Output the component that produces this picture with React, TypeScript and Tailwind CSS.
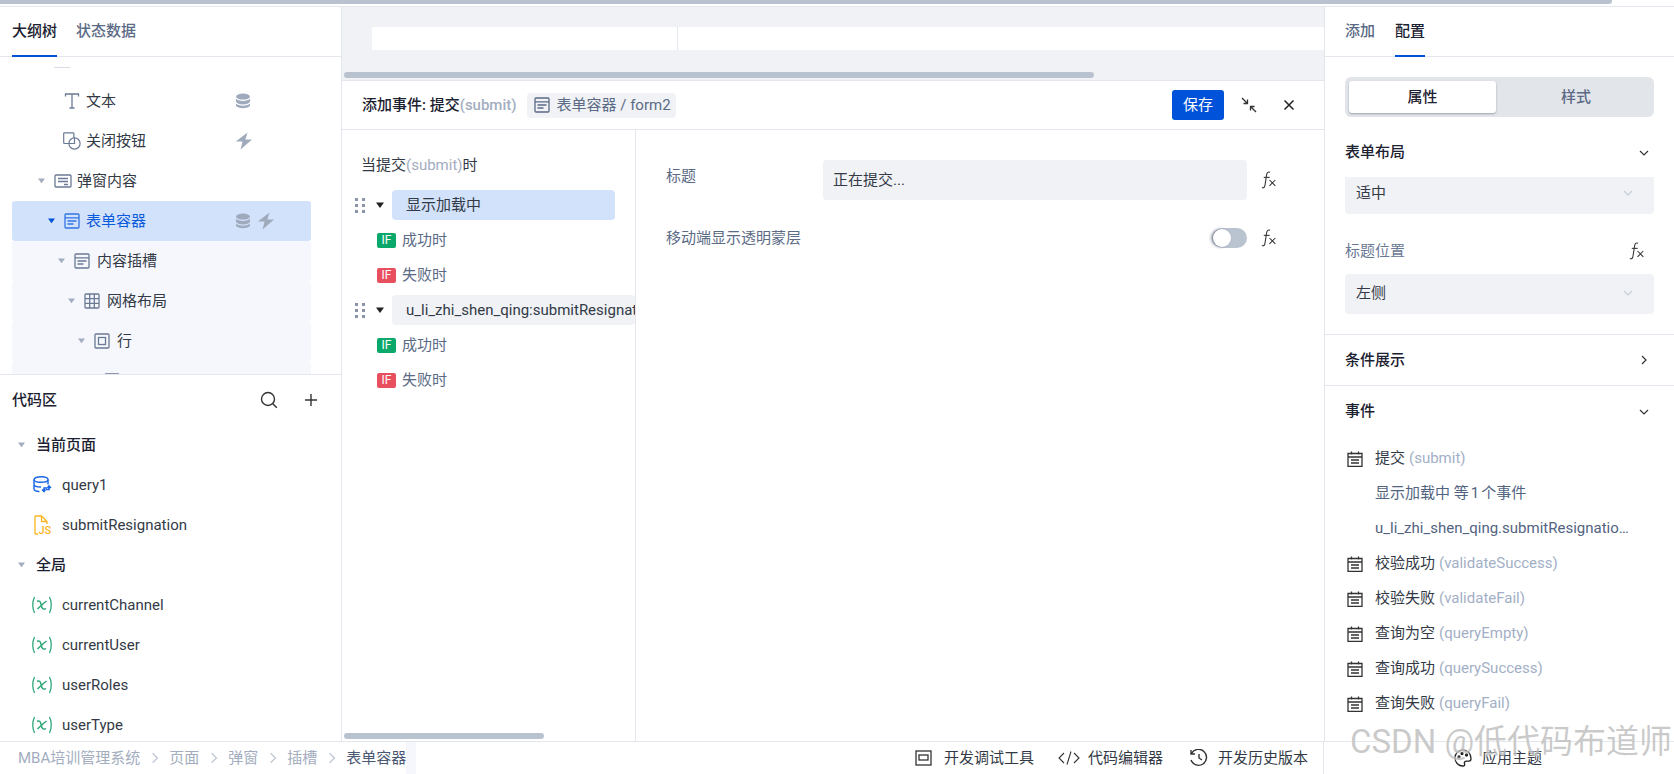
import React from "react";

const FONT = "font-['Roboto','Noto_Sans_CJK_SC',sans-serif]";

const Caret = ({ c = "#a3adc0", s = 8 }: { c?: string; s?: number }) => (
  <svg width={s} height={s * 0.75} viewBox="0 0 8 6" className="shrink-0"><path d="M0 0.5h8L4 6z" fill={c} /></svg>
);
const DbFill = () => (
  <svg width="16" height="16" viewBox="0 0 16 16" className="shrink-0" fill="#a0aabd">
    <ellipse cx="8" cy="3.6" rx="7" ry="3" />
    <path d="M1 5.8c1.4 1.4 4 2.1 7 2.1s5.6-.7 7-2.1v3c-.6 1.6-3.6 2.6-7 2.6s-6.4-1-7-2.6z" />
    <path d="M1 10.6c1.4 1.4 4 2.1 7 2.1s5.6-.7 7-2.1v2c-.6 1.7-3.6 2.7-7 2.7s-6.4-1-7-2.7z" />
  </svg>
);
const Bolt = () => (
  <svg width="18" height="18" viewBox="0 0 18 18" className="shrink-0"><path d="M12.5 .5L.8 9.5h6.7l-1.9 8L17 7.6h-6.6z" fill="#a0aabd" /></svg>
);
const FormIcon = ({ c = "#6b7a94", s = 16 }: { c?: string; s?: number }) => (
  <svg width={s} height={s} viewBox="0 0 16 16" fill="none" stroke={c} strokeWidth="1.3" className="shrink-0">
    <rect x="1" y="1" width="14" height="14" rx="1" /><path d="M1 4.8h14M3.5 8h9M3.5 11h6" />
  </svg>
);
const PopupIcon = () => (
  <svg width="18" height="14" viewBox="0 0 18 14" fill="none" stroke="#6b7a94" strokeWidth="1.3" className="shrink-0">
    <rect x="1" y="1" width="16" height="12" rx="1" /><path d="M4 4.5h10M4 7.5h10M10 10.5h4" />
  </svg>
);
const GridIcon = () => (
  <svg width="16" height="16" viewBox="0 0 16 16" fill="none" stroke="#6b7a94" strokeWidth="1.3" className="shrink-0">
    <rect x="1" y="1" width="14" height="14" rx="1" /><path d="M1 5.7h14M1 10.3h14M5.7 1v14M10.3 1v14" />
  </svg>
);
const RowIcon = () => (
  <svg width="16" height="16" viewBox="0 0 16 16" fill="none" stroke="#6b7a94" strokeWidth="1.3" className="shrink-0">
    <rect x="1" y="1" width="14" height="14" rx="1" /><rect x="4.5" y="4.5" width="7" height="7" />
  </svg>
);
const TextIcon = () => (
  <svg width="16" height="16" viewBox="0 0 16 16" fill="none" stroke="#6b7a94" strokeWidth="1.3" className="shrink-0">
    <path d="M1.5 3.5V1h13v2.5M8 1v14M5.5 15h5" />
  </svg>
);
const BtnIcon = () => (
  <svg width="18" height="18" viewBox="0 0 18 18" fill="none" stroke="#6b7a94" strokeWidth="1.2" className="shrink-0">
    <path d="M6 11.5H1.5a.8.8 0 0 1-.8-.8V1.6a.8.8 0 0 1 .8-.8h8.6a.8.8 0 0 1 .8.8V6" />
    <circle cx="11.5" cy="11.5" r="5.6" /><path d="M5.8 11.5h5.7V6" />
  </svg>
);
const Chev = ({ dir = "down", c = "#333", s = 10 }: { dir?: "down" | "right"; c?: string; s?: number }) => (
  <svg width={s} height={s} viewBox="0 0 10 10" fill="none" stroke={c} strokeWidth="1.2" className="shrink-0">
    {dir === "down" ? <path d="M1 3l4 4 4-4" /> : <path d="M3 1l4 4-4 4" />}
  </svg>
);
const Fx = () => (
  <svg width="17" height="18" viewBox="0 0 16 17" fill="none" stroke="#333" strokeWidth="1" className="shrink-0">
    <path d="M8.5 1.2C6.6.4 5.7 1.4 5.3 3.5L3.7 13.5C3.3 15.7 2.3 16.3.8 15.6" /><path d="M2.6 6h5.6" />
    <path d="M8 8.5l5.500 5.500M13.500 8.500L8 14" />
  </svg>
);
const Cal = () => (
  <svg width="16" height="16" viewBox="0 0 16 16" fill="none" stroke="#333" strokeWidth="1.3" className="shrink-0">
    <path d="M1 2.5h14v12.8H1zM1 6h14M4.5.5v3M11.5.5v3M4 9h8M4 12h8" />
  </svg>
);
const Var = () => (
  <svg width="22" height="18" viewBox="0 0 22 18" fill="none" stroke="#2fa87a" strokeWidth="1.3" className="shrink-0">
    <path d="M3.5 1C1.2 5.5 1.2 12.5 3.5 17M18.5 1c2.3 4.500 2.300 11.500 0 16" />
    <path d="M6 5.200c2.800-1.100 3.500.7 4.200 3.800s1.300 5 4.800 3.600M15.500 5c-2.800 1.900-5.200 4.500-9 8" strokeWidth="1.500" />
  </svg>
);
const QueryIcon = () => (
  <svg width="19" height="18" viewBox="0 0 19 18" fill="none" stroke="#1b66e6" strokeWidth="1.400" className="shrink-0">
    <ellipse cx="8" cy="3.500" rx="7" ry="2.800" />
    <path d="M1 3.500v9.300c0 1.500 2.300 2.600 5.500 2.800M1 8.200c0 1.600 3 2.800 7 2.800M15 3.500v5" />
    <path d="M9 13.500l2 2 1.500-2M11 15.500v-3.500h3" strokeWidth="1.500" />
    <path d="M18 12l-2-2-1.500 2M16 10v3.500h-3" strokeWidth="1.500" />
  </svg>
);
const JsIcon = () => (
  <svg width="17" height="20" viewBox="0 0 17 20" fill="none" stroke="#fbb41e" strokeWidth="1.300" className="shrink-0">
    <path d="M4 19H2a1 1 0 0 1-1-1V2a1 1 0 0 1 1-1h5.500L13 6.500V9" /><path d="M7.500 1v5.500H13" />
    <text x="4.500" y="19" fontSize="11" fontWeight="500" fill="#fbb41e" stroke="none" fontFamily="Roboto, sans-serif">JS</text>
  </svg>
);

type TreeRowProps = {
  pad: number; icon: React.ReactNode; label: string; caret?: boolean; bg?: string; blue?: boolean; extra?: React.ReactNode; textGap?: string;
};
const TreeRow = ({ pad, icon, label, caret = true, bg = "", blue, extra, textGap = "ml-[7px]" }: TreeRowProps) => (
  <div className={`relative flex h-10 w-[299px] shrink-0 items-center rounded-[3px] ${bg}`} style={{ paddingLeft: pad }}>
    <div className="flex w-[16px] shrink-0 items-center">{caret && <Caret c={blue ? "#0052d9" : "#a3adc0"} s={7} />}</div>
    {icon}
    <span className={`${textGap} ${blue ? "text-[#0b5bdd]" : "text-[#333a46]"}`}>{label}</span>
    {extra && <div className="absolute left-[223px] top-0 flex h-full items-center gap-[6px]">{extra}</div>}
  </div>
);

const LeftPanel = () => (
  <div className="flex h-full w-[341px] shrink-0 flex-col">
    <div className="flex h-[50px] shrink-0 gap-[19px] border-b border-[#e3e6ec] pl-3">
      <div className="-mb-px flex items-center border-b-2 border-[#0052d9] font-medium text-[#1b2130]">大纲树</div>
      <div className="flex items-center font-medium text-[#5b6a85]">状态数据</div>
    </div>
    <div className="h-[317px] shrink-0 overflow-hidden pl-3">
      <div className="flex flex-col">
        <div className="h-6 pl-[42px] pt-[10px]"><div className="h-px w-4 bg-[#d8dce4]" /></div>
        <TreeRow pad={36} caret={false} icon={<TextIcon />} label="文本" textGap="ml-[6px]" extra={<DbFill />} />
        <TreeRow pad={35} caret={false} icon={<BtnIcon />} label="关闭按钮" textGap="ml-[5px]" extra={<Bolt />} />
        <TreeRow pad={26} icon={<PopupIcon />} label="弹窗内容" textGap="ml-[5px]" />
        <TreeRow pad={36} blue bg="bg-[#d2e2fa]" icon={<FormIcon c="#2f74e6" />} label="表单容器" textGap="ml-[6px]" extra={<><DbFill /><Bolt /></>} />
        <TreeRow pad={46} bg="bg-[#f5f7fd]" icon={<FormIcon />} label="内容插槽" />
        <TreeRow pad={56} bg="bg-[#f5f7fd]" icon={<GridIcon />} label="网格布局" />
        <TreeRow pad={66} bg="bg-[#f5f7fd]" icon={<RowIcon />} label="行" />
        <TreeRow pad={76} bg="bg-[#f5f7fd]" caret={false} icon={<RowIcon />} label="" />
      </div>
    </div>
    <div className="flex min-h-0 flex-1 flex-col border-t border-[#e3e6ec] pl-3">
      <div className="flex h-[50px] shrink-0 items-center font-medium text-[#1b2130]">
        <span className="flex-1">代码区</span>
        <svg width="18" height="18" viewBox="0 0 18 18" fill="none" stroke="#333" strokeWidth="1.4"><circle cx="8" cy="8" r="6.500" /><path d="M12.800 12.800l4 4" /></svg>
        <svg width="12" height="12" viewBox="0 0 12 12" fill="none" stroke="#333" strokeWidth="1.4" className="ml-[27px] mr-[24px]"><path d="M6 0v12M0 6h12" /></svg>
      </div>
      <CodeHead label="当前页面" />
      <CodeRow icon={<QueryIcon />} label="query1" />
      <CodeRow icon={<JsIcon />} label="submitResignation" />
      <CodeHead label="全局" />
      <CodeRow icon={<Var />} label="currentChannel" />
      <CodeRow icon={<Var />} label="currentUser" />
      <CodeRow icon={<Var />} label="userRoles" />
      <CodeRow icon={<Var />} label="userType" />
    </div>
  </div>
);
const CodeHead = ({ label }: { label: string }) => (
  <div className="flex h-10 shrink-0 items-center pl-[6px] font-medium text-[#1b2130]">
    <Caret s={7} /><span className="ml-[11px]">{label}</span>
  </div>
);
const CodeRow = ({ icon, label }: { icon: React.ReactNode; label: string }) => (
  <div className="flex h-10 shrink-0 items-center text-[#333a46]">
    <div className="flex w-[50px] shrink-0 justify-center pl-[10px]">{icon}</div>
    <span>{label}</span>
  </div>
);

const Dots = () => (
  <div className="grid w-[9px] shrink-0 grid-cols-2 gap-x-[5px] gap-y-[3px]">
    {[0, 1, 2, 3, 4, 5].map((i) => <div key={i} className="h-[3px] w-[2.5px] bg-[#8a94a6]" />)}
  </div>
);
const IfRow = ({ ok, label }: { ok: boolean; label: string }) => (
  <div className="flex h-[35px] items-center pl-[35px] text-[#5b6a85]">
    <div className={`flex h-[15px] w-[19px] items-center justify-center rounded-[2px] text-[12px] text-white ${ok ? "bg-[#0aa86b]" : "bg-[#e8505f]"}`}>IF</div>
    <span className="ml-[6px]">{label}</span>
  </div>
);
const ActionRow = ({ label, bg }: { label: string; bg: string }) => (
  <div className="flex h-[35px] items-center pl-[13px]">
    <Dots />
    <div className="ml-[12px] mr-[8px]"><Caret c="#222" s={8} /></div>
    <div className={`flex h-[30px] flex-1 items-center overflow-hidden whitespace-nowrap rounded-[4px] pl-[14px] text-[#333a46] ${bg}`}>{label}</div>
  </div>
);

const CenterPanel = () => (
  <div className="flex h-full w-[984px] shrink-0 flex-col border-l border-r border-[#e3e6ec]">
    <div className="flex h-[74px] shrink-0 flex-col border-b border-[#e3e6ec] bg-[#f0f2f6]">
      <div className="mt-5 flex h-[23px] shrink-0 pl-[30px]">
        <div className="w-[305px] bg-white" />
        <div className="w-px bg-[#e3e6ec]" />
        <div className="flex-1 bg-white" />
      </div>
      <div className="ml-[2px] mt-[22px] h-[6px] w-[750px] rounded-[3px] bg-[#b9c2cf]" />
    </div>
    <div className="flex h-[49px] shrink-0 items-center border-b border-[#e3e6ec] pl-5">
      <span className="font-medium text-[#1b2130]">添加事件: 提交</span>
      <span className="font-medium text-[#a3adc0]">(submit)</span>
      <div className="ml-[10px] flex h-[25px] items-center rounded-[4px] bg-[#f0f2f6] pl-[7px] pr-[5px] text-[#5b6a85]">
        <FormIcon c="#5b6a85" /><span className="ml-[7px]">表单容器 / form2</span>
      </div>
      <div className="flex-1" />
      <div className="flex h-[30px] w-[52px] items-center justify-center rounded-[3px] bg-[#0052d9] text-white">保存</div>
      <svg width="16" height="16" viewBox="0 0 16 16" fill="none" stroke="#333" strokeWidth="1.3" className="ml-[17px]"><path d="M1 1l5.500 5.500M6.500 2.500v4h-4M15 15L9.500 9.500M9.500 13.500v-4h4" /></svg>
      <svg width="12" height="12" viewBox="0 0 12 12" fill="none" stroke="#222" strokeWidth="1.5" className="ml-[26px] mr-[29px]"><path d="M1.500 1.500l9 9M10.500 1.500l-9 9" /></svg>
    </div>
    <div className="flex min-h-0 flex-1">
      <div className="relative h-full w-[294px] shrink-0 overflow-hidden border-r border-[#e3e6ec] pt-5">
        <div className="flex h-[30px] items-center pl-[19px] text-[#333a46]">当提交<span className="text-[#a3adc0]">(submit)</span>时</div>
        <div className="mt-[7.5px]"><ActionRow label="显示加载中" bg="mr-[20px] bg-[#d2e2fa]" /></div>
        <IfRow ok label="成功时" />
        <IfRow ok={false} label="失败时" />
        <ActionRow label="u_li_zhi_shen_qing:submitResignation" bg="min-w-0 bg-[#f0f2f6]" />
        <IfRow ok label="成功时" />
        <IfRow ok={false} label="失败时" />
        <div className="absolute bottom-[2px] left-[2px] h-[6px] w-[200px] rounded-[3px] bg-[#b9c2cf]" />
      </div>
      <div className="flex min-w-0 flex-1 flex-col pl-[30px] pt-[30px]">
        <div className="flex h-10 items-start">
          <span className="mt-[5px] w-[157px] shrink-0 text-[#5b6a85]">标题</span>
          <div className="flex h-10 w-[424px] items-center rounded-[4px] bg-[#f0f2f6] pl-[10px] text-[#333a46]">正在提交...</div>
          <div className="ml-[14px] mt-[11px]"><Fx /></div>
        </div>
        <div className="mt-[20px] flex h-[36px] items-center">
          <span className="w-[546px] shrink-0 text-[#5b6a85]">移动端显示透明蒙层</span>
          <div className="relative h-5 w-[35px] rounded-full bg-[#bac3d0]">
            <div className="absolute left-px top-px h-[18px] w-[18px] rounded-full bg-white shadow-[-2px_0_3px_rgba(80,90,110,0.6)]" />
          </div>
          <div className="ml-[14px]"><Fx /></div>
        </div>
      </div>
    </div>
  </div>
);

const Section = ({ label, dir = "down" }: { label: string; dir?: "down" | "right" }) => (
  <div className="flex h-[25px] items-center justify-between pr-[5px] font-medium text-[#1b2130]">
    <span>{label}</span><Chev dir={dir} />
  </div>
);
const Sel = ({ label, h }: { label: string; h: string }) => (
  <div className={`flex items-center justify-between rounded-b-[4px] bg-[#f0f2f6] pl-[11px] pr-[21px] text-[#333a46] ${h}`}>
    <span>{label}</span><Chev c="#c8ced8" />
  </div>
);
const EventRow = ({ label, en }: { label: string; en: string }) => (
  <div className="flex h-[35px] items-center">
    <div className="ml-[2px] mr-[12px]"><Cal /></div>
    <span className="text-[#333a46]">{label}</span>
    <span className="ml-[4px] text-[#a3afc6]">({en})</span>
  </div>
);

const RightPanel = () => (
  <div className="flex h-full min-w-0 flex-1 flex-col">
    <div className="flex h-[50px] shrink-0 gap-[20px] border-b border-[#e3e6ec] pl-5">
      <div className="flex items-center font-medium text-[#5b6a85]">添加</div>
      <div className="-mb-px flex items-center border-b-2 border-[#0052d9] font-medium text-[#1b2130]">配置</div>
    </div>
    <div className="flex h-[278px] shrink-0 flex-col border-b border-[#e3e6ec] px-5 pt-5">
      <div className="flex h-10 items-center rounded-[6px] bg-[#e2e5ea] p-1">
        <div className="flex h-[32px] w-[147px] items-center justify-center rounded-[3px] bg-white font-medium text-[#1b2130] shadow-[0_1px_2px_rgba(90,100,120,0.5)]">属性</div>
        <div className="flex flex-1 items-center justify-center pl-[6px] font-medium text-[#5b6a85]">样式</div>
      </div>
      <div className="mt-[23px]"><Section label="表单布局" /></div>
      <Sel label="适中" h="mt-[12px] h-[37px] pb-[5px]" />
      <div className="mt-[24px] flex h-[26px] items-center justify-between pr-[8px] text-[#6b7a94]">
        <span>标题位置</span><Fx />
      </div>
      <Sel label="左侧" h="mt-[10px] h-10 rounded-t-[4px] pb-[2px]" />
    </div>
    <div className="flex h-[51px] shrink-0 flex-col justify-center border-b border-[#e3e6ec] px-5">
      <Section label="条件展示" dir="right" />
    </div>
    <div className="flex min-h-0 flex-1 flex-col px-5 pt-[13px]">
      <Section label="事件" />
      <div className="mt-[17px]"><EventRow label="提交" en="submit" /></div>
      <div className="flex h-[35px] items-center pl-[30px] text-[#52637f]">显示加载中 等<span className="mx-[2px]">1</span>个事件</div>
      <div className="flex h-[35px] items-center whitespace-nowrap pl-[30px] text-[#52637f]">u_li_zhi_shen_qing.submitResignatio…</div>
      <EventRow label="校验成功" en="validateSuccess" />
      <EventRow label="校验失败" en="validateFail" />
      <EventRow label="查询为空" en="queryEmpty" />
      <EventRow label="查询成功" en="querySuccess" />
      <EventRow label="查询失败" en="queryFail" />
    </div>
  </div>
);

const Crumb = ({ label, last }: { label: string; last?: boolean }) => (
  <>
    <span className={last ? "text-[#4a5873]" : "text-[#a3adc0]"}>{label}</span>
    {!last && <div className="mx-[8.5px]"><Chev dir="right" c="#c3cad6" s={12} /></div>}
    {last && <div className="h-[33px] w-[10px] bg-[#f5f7fd]" />}
  </>
);

const BottomBar = () => (
  <div className="flex h-[33px] shrink-0 items-center border-t border-[#e3e6ec]">
    <div className="flex w-[915px] shrink-0 items-center pl-[18px]">
      <Crumb label="MBA培训管理系统" /><Crumb label="页面" /><Crumb label="弹窗" /><Crumb label="插槽" /><Crumb label="表单容器" last />
    </div>
    <svg width="17" height="16" viewBox="0 0 17 16" fill="none" stroke="#333" strokeWidth="1.3" className="shrink-0"><rect x="1" y="1" width="15" height="14" /><rect x="4" y="5" width="9" height="5" /></svg>
    <span className="ml-[12px] text-[#333a46]">开发调试工具</span>
    <svg width="22" height="14" viewBox="0 0 22 14" fill="none" stroke="#333" strokeWidth="1.1" className="ml-[24px] shrink-0"><path d="M6 2L1 7l5 5M16 2l5 5-5 5M13 .5L9 13.500" /></svg>
    <span className="ml-[8px] text-[#333a46]">代码编辑器</span>
    <svg width="20" height="18" viewBox="0 0 20 18" fill="none" stroke="#333" strokeWidth="1.4" className="ml-[26px] shrink-0"><path d="M2.500 4.500A8 8 0 1 1 2 11M2 1v4h4M10 5v4l3 2" /></svg>
    <span className="ml-[9px] text-[#333a46]">开发历史版本</span>
    <div className="ml-[15px] flex h-full flex-1 items-center border-l border-[#e3e6ec] pl-[130px]">
      <svg width="18" height="18" viewBox="0 0 18 18" fill="none" stroke="#222" strokeWidth="1.3" className="shrink-0"><path d="M9 1C4.500 1 1 4.500 1 9s3.500 8 8 8c1.500 0 2-1 1.500-2.200-.6-1.400.4-2.600 2-2.600H15c1.300 0 2-1 2-2.600C17 4.500 13.500 1 9 1z" /><circle cx="5" cy="8" r="1" fill="#222" /><circle cx="8" cy="4.500" r="1" fill="#222" /><circle cx="12.500" cy="6" r="1" fill="#222" /></svg>
      <span className="ml-[10px] text-[#333a46]">应用主题</span>
    </div>
  </div>
);

export default function App() {
  return (
    <div className={`relative flex h-[774px] w-[1674px] flex-col overflow-hidden bg-white text-[15px] ${FONT}`}>
      <div className="h-[4px] w-[1612px] shrink-0 rounded-br-[3px] bg-[#b9c2cf]" />
      <div className="h-[3px] shrink-0 border-b border-[#e3e6ec]" />
      <div className="flex min-h-0 flex-1">
        <LeftPanel />
        <CenterPanel />
        <RightPanel />
      </div>
      <BottomBar />
      <div className="pointer-events-none absolute left-[1350px] top-[722px] whitespace-nowrap text-[33px] leading-[40px] text-[rgba(150,150,150,0.5)] [text-shadow:0_0_2px_rgba(255,255,255,0.9)]">CSDN @低代码布道师</div>
    </div>
  );
}
